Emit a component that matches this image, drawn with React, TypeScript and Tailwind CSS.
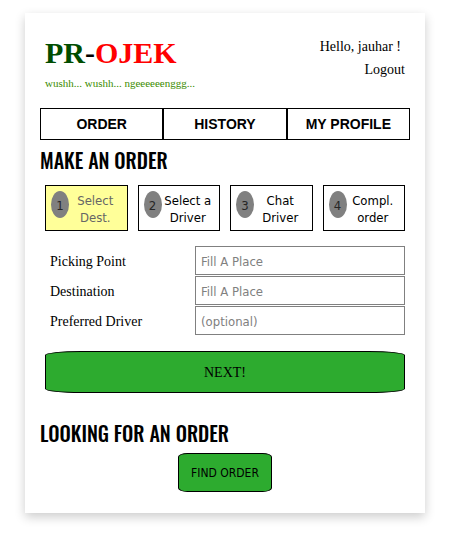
const tahoma = "font-['DejaVu_Sans_Condensed','DejaVu_Sans',sans-serif]";
const serif = "font-['Liberation_Serif',serif]";
const heading = "font-['Oswald',sans-serif] font-medium text-[20px] leading-[28px]";

const tabs = ['ORDER', 'HISTORY', 'MY PROFILE'];

const steps = [
  { lines: ['Select', 'Dest.'], active: true },
  { lines: ['Select a', 'Driver'], active: false },
  { lines: ['Chat', 'Driver'], active: false },
  { lines: ['Compl.', 'order'], active: false },
];

const fields = [
  { id: 'picking', label: 'Picking Point', placeholder: 'Fill A Place' },
  { id: 'destination', label: 'Destination', placeholder: 'Fill A Place' },
  { id: 'driver', label: 'Preferred Driver', placeholder: '(optional)' },
];

function Header() {
  return (
    <header className="flex justify-between px-[5px]">
      <div>
        <h1 className="text-[30px] leading-[36px] font-bold text-black">
          <span className="text-[#004d00]">PR</span>-<span className="text-[#ff0000]">OJEK</span>
        </h1>
        <p className="mt-1 text-[11px] leading-4 text-[#3c8c00]">wushh... wushh... ngeeeeeenggg...</p>
      </div>
      <div className="flex flex-col items-end text-[14px] leading-[23px]">
        <span className="pr-1">Hello, jauhar !</span>
        <a href="#logout">Logout</a>
      </div>
    </header>
  );
}

function Steps() {
  return (
    <ol className="mx-[5px] mt-[11px] grid grid-cols-4 gap-[10px]">
      {steps.map((step, i) => (
        <li
          key={i}
          className={`flex h-[46px] items-start border border-black p-[5px] ${
            step.active ? 'bg-[#ffff99] text-[#666666]' : 'bg-white text-black'
          } ${tahoma} text-[13px] leading-[17px]`}
        >
          <span className="flex h-[27px] w-[18px] shrink-0 items-center justify-center rounded-[50%] bg-[#808080] pt-[2px] text-[#262626]">
            {i + 1}
          </span>
          <span className="flex grow flex-col items-center whitespace-nowrap pt-px">
            {step.lines.map((line) => (
              <span key={line}>{line}</span>
            ))}
          </span>
        </li>
      ))}
    </ol>
  );
}

export default function App() {
  return (
    <div className="bg-white pt-[13px] pr-[33px] pb-[40px] pl-[25px]">
      <main
        className={`w-full max-w-[400px] bg-white px-[15px] pt-[22px] pb-[21px] text-black shadow-[0_4px_10px_rgba(0,0,0,0.2)] ${serif}`}
      >
        <Header />
        <nav className="mt-[17px] grid grid-cols-3">
          {tabs.map((tab) => (
            <a
              key={tab}
              href="#tab"
              className="h-8 border border-black text-center font-['Liberation_Sans',sans-serif] text-[14px] leading-[30px] font-bold"
            >
              {tab}
            </a>
          ))}
        </nav>
        <h2 className={`mt-[6px] ${heading}`}>MAKE AN ORDER</h2>
        <Steps />
        <form className="mx-[5px] mt-[15px]" onSubmit={(e) => e.preventDefault()}>
          <div className="flex flex-col gap-px">
            {fields.map((field) => (
              <div key={field.id} className="flex items-center">
                <label htmlFor={field.id} className="w-[150px] shrink-0 pt-[2px] pl-[5px] text-[14px]">
                  {field.label}
                </label>
                <input
                  id={field.id}
                  type="text"
                  placeholder={field.placeholder}
                  className={`h-[29px] w-0 grow border border-[#808080] px-[5px] pt-px text-[13px] placeholder:text-[#808080] ${tahoma}`}
                />
              </div>
            ))}
          </div>
          <button
            type="submit"
            className="mt-[16px] block h-[42px] w-full rounded-[10%] border border-black bg-[#2dab2f] text-[14px]"
          >
            NEXT!
          </button>
        </form>
        <h2 className={`mt-[26px] ${heading}`}>LOOKING FOR AN ORDER</h2>
        <div className="mt-[6px] flex justify-center">
          <button
            type="button"
            className={`h-[39px] rounded-[10%] border border-black bg-[#2dab2f] px-3 text-[12px] whitespace-nowrap ${tahoma}`}
          >
            FIND ORDER
          </button>
        </div>
      </main>
    </div>
  );
}
